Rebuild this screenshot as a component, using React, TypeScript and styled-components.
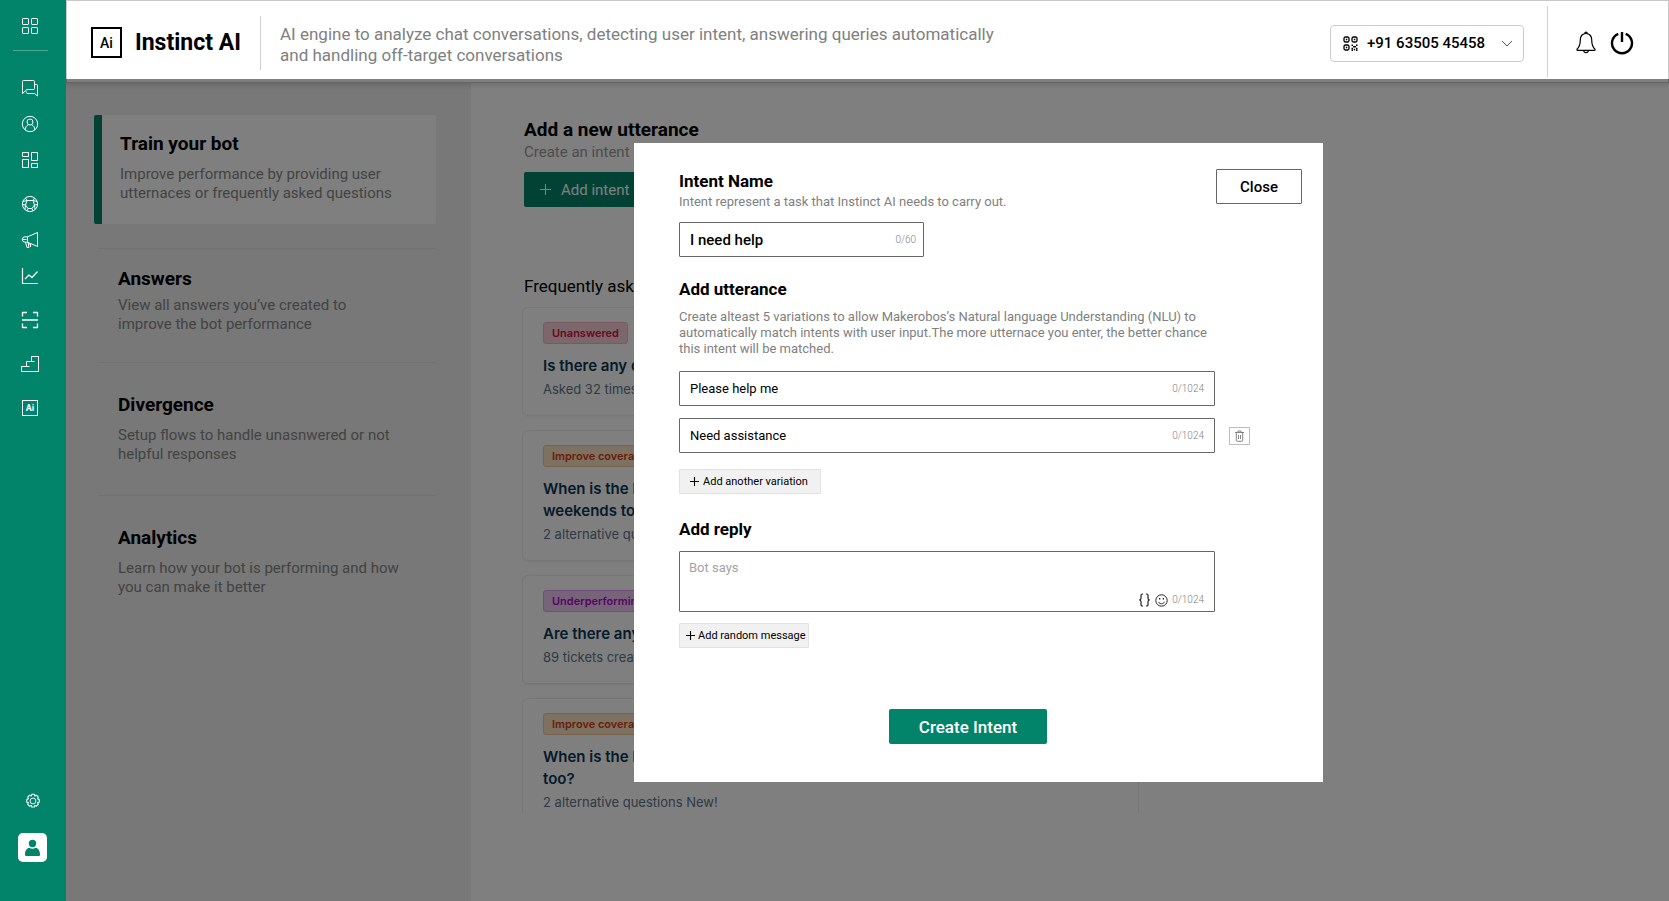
import React from "react";
import styled, { createGlobalStyle } from "styled-components";

const GREEN = "#02846b";

const GlobalStyle = createGlobalStyle`
  *, *::before, *::after { box-sizing: border-box; }
  body { margin: 0; background: #fff; font-family: Roboto, "Liberation Sans", sans-serif; color: #000; }
  h1, h2, h3, p { margin: 0; }
  button, input, select, textarea { font-family: inherit; color: inherit; margin: 0; }
  button { cursor: pointer; }
  a { color: inherit; text-decoration: none; }
  svg { display: block; flex: none; }
`;

/* ---------- shell ---------- */

const Shell = styled.div`
  position: relative;
  display: flex;
  min-height: 100vh;
`;

const Rail = styled.nav`
  position: relative;
  z-index: 3;
  flex: none;
  width: 66px;
  padding: 14px 0 39px;
  display: flex;
  flex-direction: column;
  align-items: center;
  background: ${GREEN};
  color: #fff;
`;

const RailMain = styled.div`
  display: flex;
  flex-direction: column;
  align-items: center;
  padding-right: 6px;
`;

const RailDivider = styled.hr`
  width: 35px;
  height: 1px;
  margin: 12px 0 25px;
  border: 0;
  background: #4fa897;
`;

const RailGroups = styled.div`
  display: flex;
  flex-direction: column;
  gap: 20px;
`;

const RailGroup = styled.div`
  display: flex;
  flex-direction: column;
  gap: 12px;
`;

const RailButton = styled.button`
  width: 32px;
  height: 24px;
  padding: 0;
  border: 0;
  background: none;
  display: flex;
  align-items: center;
  justify-content: center;
`;

const RailFooter = styled.div`
  margin-top: auto;
  padding-right: 1px;
  display: flex;
  flex-direction: column;
  align-items: center;
  gap: 20px;
`;

const Avatar = styled.button`
  width: 29px;
  height: 29px;
  padding: 0;
  border: 0;
  border-radius: 5px;
  background: #fff;
  color: ${GREEN};
  display: flex;
  align-items: center;
  justify-content: center;
`;

const Workspace = styled.div`
  flex: 1;
  min-width: 0;
  display: flex;
  flex-direction: column;
`;

/* ---------- header ---------- */

const Header = styled.header`
  position: relative;
  display: flex;
  align-items: center;
  height: 83px;
  padding: 0 34px 0 24px;
  border: 1px solid #c8c8c8;
  box-shadow: 0 2px 5px rgba(0, 0, 0, 0.14);
`;

const LogoBox = styled.span`
  width: 31px;
  height: 31px;
  border: 2px solid #000;
  display: flex;
  align-items: center;
  justify-content: center;
  font-size: 14px;
  line-height: 18px;
  font-weight: 500;
`;

const Brand = styled.h1`
  margin-left: 13px;
  font-size: 23px;
  line-height: 28px;
  font-weight: 700;
  white-space: nowrap;
`;

const Separator = styled.span<{ $height: number }>`
  flex: none;
  width: 1px;
  height: ${(p) => p.$height}px;
  background: #d0d0d0;
`;

const BrandSide = styled.div`
  display: flex;
  align-items: center;
  flex: none;
  width: 170px;
  justify-content: space-between;
  margin-right: 19px;
  padding-top: 2px;
  & > div { display: flex; align-items: center; }
`;

const Tagline = styled.p`
  flex: 0 1 750px;
  font-size: 17px;
  line-height: 21px;
  color: #808080;
  padding-top: 7px;
`;

const HeaderTools = styled.div`
  margin-left: auto;
  display: flex;
  align-items: center;
`;

const PhonePicker = styled.label`
  display: flex;
  align-items: center;
  width: 194px;
  height: 37px;
  margin: 3px 23px 0 0;
  padding: 0 10px 0 12px;
  border: 1px solid #ccc;
  border-radius: 4px;
`;

const PhoneSelect = styled.select`
  flex: 1;
  min-width: 0;
  margin-left: 9px;
  padding: 0;
  border: 0;
  background: none;
  appearance: none;
  font-size: 15px;
  line-height: 20px;
  font-weight: 500;
`;

const IconButton = styled.button`
  padding: 0;
  border: 0;
  background: none;
`;

const HeaderActions = styled.div`
  display: flex;
  align-items: center;
  gap: 14px;
  margin-left: 28px;
  padding-top: 2px;
`;

/* ---------- section menu ---------- */

const Body = styled.div`
  flex: 1;
  display: flex;
`;

const SectionMenu = styled.aside`
  flex: none;
  width: 405px;
  padding: 32px 35px 0 28px;
  background: #f0f0f0;
`;

const ActiveSection = styled.a`
  display: block;
  height: 109px;
  margin-bottom: 24px;
  padding: 17px 10px 22px 18px;
  border-left: 8px solid ${GREEN};
  border-radius: 2px;
  background: #fff;
`;

const SectionLink = styled.a<{ $top: number; $bottom: number }>`
  display: block;
  margin-left: 4px;
  padding: ${(p) => p.$top}px 8px ${(p) => p.$bottom}px 20px;
  border-top: 1px solid #e4e4e4;
`;

const SectionTitle = styled.h2`
  font-size: 19px;
  line-height: 24px;
  font-weight: 700;
`;

const SectionText = styled.p<{ $gap: number }>`
  margin-top: ${(p) => p.$gap}px;
  font-size: 15px;
  line-height: 19px;
  color: #868686;
`;

/* ---------- page content ---------- */

const Content = styled.main`
  flex: 1;
  min-width: 0;
  padding: 35px 0 0 51px;
`;

const Intro = styled.div`
  padding-left: 2px;
`;

const IntroText = styled.p`
  font-size: 15px;
  line-height: 20px;
  color: #999;
`;

const AddIntentButton = styled.button`
  display: flex;
  align-items: center;
  gap: 10px;
  height: 35px;
  margin-top: 10px;
  padding: 0 16px;
  border: 0;
  border-radius: 2px;
  background: ${GREEN};
  color: #fff;
  font-size: 15px;
  line-height: 20px;
`;

const ListHeading = styled.h2`
  margin-top: 67px;
  padding-left: 2px;
  font-size: 17px;
  line-height: 24px;
  font-weight: 400;
`;

const QuestionList = styled.ul`
  width: 617px;
  height: 506px;
  margin: 9px 0 0;
  padding: 0;
  overflow: hidden;
  list-style: none;
  display: flex;
  flex-direction: column;
  gap: 14px;
  font-family: Inter, "Liberation Sans", sans-serif;
`;

const QuestionCard = styled.li`
  flex: none;
  padding: 14px 20px 16px;
  border: 1px solid #ececec;
  border-radius: 6px;
  box-shadow: 0 1px 3px rgba(0, 0, 0, 0.06);
`;

type Tone = "red" | "orange" | "purple";
const tones: Record<Tone, { bg: string; line: string; ink: string }> = {
  red: { bg: "#f8d0d8", line: "#f4b4c0", ink: "#d80c34" },
  orange: { bg: "#fbe2c4", line: "#f2c595", ink: "#d63a12" },
  purple: { bg: "#eec8f6", line: "#dc9cea", ink: "#a60cc0" },
};

const Tag = styled.span<{ $tone: Tone }>`
  display: inline-block;
  height: 22px;
  padding: 0 8px;
  border: 1px solid ${(p) => tones[p.$tone].line};
  border-radius: 3px;
  background: ${(p) => tones[p.$tone].bg};
  color: ${(p) => tones[p.$tone].ink};
  font-size: 11px;
  line-height: 20px;
  font-weight: 600;
  vertical-align: top;
`;

const Question = styled.h3`
  margin-top: 11px;
  font-size: 15px;
  line-height: 22px;
  font-weight: 600;
  color: #0a3652;
`;

const QuestionMeta = styled.p`
  margin-top: 2px;
  font-size: 13px;
  line-height: 20px;
  color: #5e7488;
`;

/* ---------- dialog ---------- */

const Overlay = styled.div`
  position: absolute;
  z-index: 2;
  inset: 79px 0 0 66px;
  display: flex;
  align-items: flex-start;
  padding-top: 64px;
  background: rgba(0, 0, 0, 0.5);
  &::before { content: ""; flex: 568 0 0; }
  &::after { content: ""; flex: 346 0 0; }
`;

const Dialog = styled.form`
  flex: none;
  width: 689px;
  padding: 26px 21px 38px 45px;
  background: #fff;
`;

const DialogTop = styled.div`
  display: flex;
  justify-content: space-between;
  align-items: flex-start;
`;

const FieldHeading = styled.label`
  display: block;
  font-size: 17px;
  line-height: 24px;
  font-weight: 700;
`;

const FieldNote = styled.p<{ $gap: number }>`
  margin-top: ${(p) => p.$gap}px;
  font-size: 13px;
  line-height: 16px;
  color: #808080;
`;

const CloseButton = styled.button`
  width: 86px;
  height: 35px;
  padding: 0;
  border: 1px solid #666;
  border-radius: 1px;
  background: #fff;
  font-size: 15px;
  line-height: 20px;
  font-weight: 500;
`;

const Group = styled.section<{ $top: number }>`
  width: 536px;
  margin-top: ${(p) => p.$top}px;
  display: flex;
  flex-direction: column;
`;

const FieldBox = styled.div<{ $width?: number }>`
  display: flex;
  align-items: center;
  width: ${(p) => (p.$width ? `${p.$width}px` : "100%")};
  height: 35px;
  padding: 0 ${(p) => (p.$width ? 7 : 10)}px 0 10px;
  border: 1px solid #666;
  border-radius: 1px;
`;

const TextInput = styled.input<{ $strong?: boolean }>`
  flex: 1;
  min-width: 0;
  padding: 0;
  border: 0;
  outline: 0;
  background: none;
  font-size: ${(p) => (p.$strong ? 15 : 13)}px;
  line-height: 20px;
  font-weight: ${(p) => (p.$strong ? 500 : 400)};
`;

const Counter = styled.span`
  font-size: 10px;
  line-height: 14px;
  font-weight: 300;
  color: #808080;
`;

const VariationRow = styled.div`
  display: flex;
  align-items: center;
  margin-right: -35px;
`;

const DeleteButton = styled.button`
  flex: none;
  width: 21px;
  height: 18px;
  margin-left: 14px;
  padding: 0;
  border: 1px solid #bdbdbd;
  background: #fff;
  display: flex;
  align-items: center;
  justify-content: center;
`;

const Variations = styled.div`
  display: flex;
  flex-direction: column;
  gap: 12px;
  margin: 14px 0 16px;
`;

const SmallButton = styled.button<{ $pad: number; $gap: number; $width: number }>`
  display: flex;
  align-items: center;
  gap: ${(p) => p.$gap}px;
  width: ${(p) => p.$width}px;
  height: 25px;
  padding: 0 0 0 ${(p) => p.$pad}px;
  border: 1px solid #e2e2e2;
  border-radius: 1px;
  background: #f1f1f1;
  font-size: 11px;
  line-height: 14px;
  font-weight: 400;
  color: #000;
  white-space: nowrap;
`;

const ReplyBox = styled.div`
  display: flex;
  flex-direction: column;
  height: 61px;
  margin: 10px 0 11px;
  padding: 8px 10px 4px 9px;
  border: 1px solid #666;
  border-radius: 1px;
`;

const ReplyInput = styled.textarea`
  flex: 1;
  min-height: 0;
  padding: 0;
  border: 0;
  outline: 0;
  resize: none;
  overflow: hidden;
  background: none;
  font-size: 13px;
  line-height: 16px;
  &::placeholder { color: #a3a3a3; opacity: 1; }
`;

const ReplyTools = styled.div`
  display: flex;
  align-items: center;
  justify-content: flex-end;
  gap: 4px;
`;

const DialogActions = styled.div`
  display: flex;
  justify-content: center;
  margin-top: 61px;
  padding-right: 45px;
`;

const CreateButton = styled.button`
  width: 158px;
  height: 35px;
  padding: 0;
  border: 0;
  border-radius: 2px;
  background: ${GREEN};
  color: #fff;
  font-size: 17px;
  line-height: 20px;
  font-weight: 500;
`;

/* ---------- icons ---------- */

const Line = ({ size = 18, w = 1, children }: { size?: number; w?: number; children: React.ReactNode }) => (
  <svg width={size} height={size} viewBox="0 0 18 18" fill="none" stroke="currentColor" strokeWidth={w} strokeLinejoin="round" aria-hidden="true">
    {children}
  </svg>
);

const GridIcon = () => (
  <Line>
    <rect x="1.5" y="1.5" width="6" height="6" rx=".6" />
    <rect x="10.5" y="1.5" width="6" height="6" rx=".6" />
    <rect x="1.5" y="10.5" width="6" height="6" rx=".6" />
    <rect x="10.5" y="10.5" width="6" height="6" rx=".6" />
  </Line>
);
const ChatIcon = () => (
  <Line>
    <path d="M1.500 14.500V2.500q0-1 1-1h10q1 0 1 1v7q0 1-1 1H6z" />
    <path d="M5.500 12.500v1q0 1 1 1h7l3 2.500V6.500q0-1-1-1h-2" />
  </Line>
);
const UserCircleIcon = () => (
  <Line>
    <circle cx="9" cy="9" r="7.700" />
    <circle cx="9" cy="7" r="3" />
    <path d="M4.200 15c0-3 1.600-4.400 3-5M13.800 15c0-3-1.600-4.400-3-5" />
  </Line>
);
const BoardIcon = () => (
  <Line>
    <rect x="1.500" y="1.500" width="6" height="4" />
    <rect x="1.500" y="8.500" width="6" height="8" />
    <rect x="10.500" y="1.500" width="6" height="8" />
    <rect x="10.500" y="12.500" width="6" height="4" />
  </Line>
);
const BallIcon = () => (
  <Line>
    <circle cx="9" cy="9" r="7.600" />
    <path d="M6 5.500h6l1.500 4.500L11 13.500H7L4.500 10z" />
    <path d="M6 5.500 4.500 3M6 5.500 2 6.500M12 5.500l1.500-2.500M12 5.500l4 1M13.500 10l3-.5M13.500 10l.5 4.500M11 13.500l1 2.500M7 13.500 6 16M4.500 10 4 14.500M4.500 10l-3-.5" />
  </Line>
);
const MegaphoneIcon = () => (
  <Line>
    <path d="M6.500 5.800 16.500 1.500v14L6.500 11.200H4a2.700 2.700 0 0 1 0-5.400z" />
    <path d="M6.500 5.800v5.400M1.500 8.500h4M4.500 11.200 6 16.500h2l-1-5M7 13h2.500v3" />
  </Line>
);
const ChartIcon = () => (
  <Line w={1.2}>
    <path d="M1.500 1v15.500H17" />
    <path d="M4 12l4-4 3 2.500 5.500-6" />
  </Line>
);
const ScanIcon = () => (
  <Line w={1.3}>
    <path d="M1.500 5.500v-4H6M12 1.500h4.500v4M16.500 12.500v4H12M6 16.500H1.500v-4M1 9h16" />
  </Line>
);
const StairsIcon = () => (
  <svg width="20" height="18" viewBox="0 0 20 18" fill="none" stroke="currentColor" aria-hidden="true">
    <path d="M1.500 16.500v-5h5v-5h5v-5h7v15zM6.500 11.500h3M11.500 6.500h3" />
  </svg>
);
const AiBadge = styled.span`
  width: 16px;
  height: 16px;
  border: 1px solid #fff;
  font-size: 9px;
  line-height: 14px;
  font-weight: 700;
  text-align: center;
`;
const GearIcon = () => (
  <Line size={16}>
    <circle cx="9" cy="9" r="3.300" />
    <path
      strokeWidth="1.2"
      d="M7.500 1.500h3l.6 1.900 1.800-.9 2.100 2.100-.9 1.800 1.900.9v3l-1.900.6.9 1.800-2.100 2.100-1.800-.9-.6 1.900h-3l-.6-1.900-1.800.9L3 12.700l.9-1.800-1.900-.6v-3l1.900-.9L3 4.600l2.100-2.100 1.800.9z"
    />
  </Line>
);
const PersonIcon = () => (
  <svg width="17" height="18" viewBox="0 0 17 18" fill="currentColor" aria-hidden="true">
    <circle cx="8.500" cy="4.500" r="3.700" />
    <path d="M1 15.500C1 11.500 3 9 5.500 8.800c1.800 1.200 4.200 1.200 6 0C14 9 16 11.500 16 15.500c0 1-.6 1.500-1.500 1.500h-12C1.600 17 1 16.500 1 15.500z" />
  </svg>
);
const QrIcon = () => (
  <svg width="15" height="15" viewBox="0 0 15 15" fill="none" stroke="#000" strokeWidth="1.3" aria-hidden="true">
    <rect x="1" y="1" width="5" height="5" rx="1.500" />
    <rect x="9" y="1" width="5" height="5" rx="1.500" />
    <rect x="1" y="9" width="5" height="5" rx="1.500" />
    <path strokeWidth="1.5" d="M2.800 3.500h1.500M10.800 3.500h1.500M2.800 11.500h1.500M8.500 9.200H10M13 9.200h1.500M10 10.800h3M8.500 12.400H10M13 12.400h1.500M8.500 14.200H10M11.500 12.800v1.500M13 14.200h1.500" />
  </svg>
);
const ChevronIcon = () => (
  <svg width="12" height="7" viewBox="0 0 12 7" fill="none" stroke="#555" aria-hidden="true">
    <path d="M1 1l5 5 5-5" />
  </svg>
);
const BellIcon = () => (
  <svg width="20" height="23" viewBox="0 0 20 23" fill="none" stroke="#000" strokeWidth="1.2" strokeLinejoin="round" aria-hidden="true">
    <path d="M10 2.500c-3.600 0-5.700 2.600-5.700 6.200 0 5-1 7.300-3.200 9.400q-.6 1.200.6 1.200h16.600q1.200 0 .6-1.200c-2.200-2.100-3.200-4.400-3.200-9.400 0-3.600-2.100-6.200-5.700-6.200z" />
    <path d="M8.600 2.600a1.400 1.400 0 1 1 2.800 0M7.600 19.500c.2 1.500 1.200 2.200 2.400 2.200s2.200-.7 2.400-2.200" />
  </svg>
);
const PowerIcon = () => (
  <svg width="24" height="24" viewBox="0 0 24 24" fill="none" stroke="#000" strokeWidth="2.4" aria-hidden="true">
    <path d="M8.300 2.900a10 10 0 1 0 7.400 0M12 1v10" />
  </svg>
);
const PlusIcon = ({ size, w = 1 }: { size: number; w?: number }) => (
  <svg width={size} height={size} viewBox="0 0 10 10" stroke="currentColor" strokeWidth={w} aria-hidden="true">
    <path d="M5 0v10M0 5h10" />
  </svg>
);
const TrashIcon = () => (
  <svg width="9" height="12" viewBox="0 0 9 12" fill="none" stroke="#777" strokeWidth=".9" aria-hidden="true">
    <path d="M0 2.500h9M3 2.500V1h3v1.500M1.300 2.500v8q0 .8.8.8h4.800q.8 0 .8-.8v-8M3.500 5v4M5.500 5v4" />
  </svg>
);
const BracesIcon = () => (
  <svg width="13" height="14" viewBox="0 0 13 14" fill="none" stroke="#222" strokeWidth="1.2" aria-hidden="true">
    <path d="M5 1h-.5Q3 1 3 2.300v3Q3 7 1.200 7 3 7 3 8.700v3Q3 13 4.500 13H5M8 1h.5Q10 1 10 2.300v3Q10 7 11.800 7 10 7 10 8.700v3Q10 13 8.500 13H8" />
  </svg>
);
const SmileIcon = () => (
  <svg width="13" height="13" viewBox="0 0 13 13" fill="none" stroke="#222" aria-hidden="true">
    <circle cx="6.500" cy="6.500" r="5.700" />
    <path d="M3.500 7.800c1 2.600 5 2.600 6 0" />
    <path strokeWidth="1.4" d="M4 4.800h1.300M7.700 4.800H9" />
  </svg>
);

/* ---------- data ---------- */

const railGroups = [
  [
    { label: "Chats", icon: <ChatIcon /> },
    { label: "Contacts", icon: <UserCircleIcon /> },
    { label: "Boards", icon: <BoardIcon /> },
  ],
  [
    { label: "Network", icon: <BallIcon /> },
    { label: "Campaigns", icon: <MegaphoneIcon /> },
    { label: "Reports", icon: <ChartIcon /> },
  ],
  [{ label: "Scan", icon: <ScanIcon /> }],
  [{ label: "Flows", icon: <StairsIcon /> }],
  [{ label: "Instinct AI", icon: <AiBadge aria-hidden="true">Ai</AiBadge> }],
];

const sections = [
  { title: "Answers", lines: ["View all answers you’ve created to", "improve the bot performance"], top: 18, gap: 5, bottom: 28 },
  { title: "Divergence", lines: ["Setup flows to handle unasnwered or not", "helpful responses"], top: 30, gap: 9, bottom: 31 },
  { title: "Analytics", lines: ["Learn how your bot is performing and how", "you can make it better"], top: 30, gap: 9, bottom: 31 },
];

const questions: { tone: Tone; tag: string; lines: string[]; meta: string }[] = [
  { tone: "red", tag: "Unanswered", lines: ["Is there any charge?"], meta: "Asked 32 times" },
  { tone: "orange", tag: "Improve coverage", lines: ["When is the bot available, and on", "weekends too?"], meta: "2 alternative questions" },
  { tone: "purple", tag: "Underperforming", lines: ["Are there any discounts?"], meta: "89 tickets created" },
  { tone: "orange", tag: "Improve coverage", lines: ["When is the bot available on weekends", "too?"], meta: "2 alternative questions New!" },
];

const Lines = ({ lines }: { lines: string[] }) => (
  <>
    {lines.map((line, i) => (
      <React.Fragment key={line}>
        {i > 0 && <br />}
        {line}
      </React.Fragment>
    ))}
  </>
);

export default function App() {
  return (
    <Shell>
      <GlobalStyle />
      <Rail aria-label="Main">
        <RailMain>
          <RailButton aria-label="Dashboard"><GridIcon /></RailButton>
          <RailDivider />
          <RailGroups>
            {railGroups.map((group, i) => (
              <RailGroup key={i}>
                {group.map((item) => (
                  <RailButton key={item.label} aria-label={item.label}>{item.icon}</RailButton>
                ))}
              </RailGroup>
            ))}
          </RailGroups>
        </RailMain>
        <RailFooter>
          <RailButton aria-label="Settings"><GearIcon /></RailButton>
          <Avatar aria-label="Account"><PersonIcon /></Avatar>
        </RailFooter>
      </Rail>

      <Workspace>
        <Header>
          <BrandSide>
            <div>
              <LogoBox>Ai</LogoBox>
              <Brand>Instinct AI</Brand>
            </div>
            <Separator $height={54} />
          </BrandSide>
          <Tagline>
            AI engine to analyze chat conversations, detecting user intent, answering queries automatically
            <br />
            and handling off-target conversations
          </Tagline>
          <HeaderTools>
            <PhonePicker>
              <QrIcon />
              <PhoneSelect aria-label="Phone number" defaultValue="a">
                <option value="a">+91 63505 45458</option>
              </PhoneSelect>
              <ChevronIcon />
            </PhonePicker>
            <Separator $height={71} />
            <HeaderActions>
              <IconButton aria-label="Notifications"><BellIcon /></IconButton>
              <IconButton aria-label="Log out"><PowerIcon /></IconButton>
            </HeaderActions>
          </HeaderTools>
        </Header>

        <Body>
          <SectionMenu>
            <ActiveSection href="#train">
              <SectionTitle>Train your bot</SectionTitle>
              <SectionText $gap={9}>
                <Lines lines={["Improve performance by providing user", "utternaces or frequently asked questions"]} />
              </SectionText>
            </ActiveSection>
            {sections.map((s) => (
              <SectionLink key={s.title} href={`#${s.title.toLowerCase()}`} $top={s.top} $bottom={s.bottom}>
                <SectionTitle>{s.title}</SectionTitle>
                <SectionText $gap={s.gap}><Lines lines={s.lines} /></SectionText>
              </SectionLink>
            ))}
          </SectionMenu>

          <Content>
            <Intro>
              <SectionTitle>Add a new utterance</SectionTitle>
              <IntroText>Create an intent</IntroText>
              <AddIntentButton><PlusIcon size={11} />Add intent</AddIntentButton>
            </Intro>
            <ListHeading>Frequently asked</ListHeading>
            <QuestionList>
              {questions.map((q, i) => (
                <QuestionCard key={i}>
                  <Tag $tone={q.tone}>{q.tag}</Tag>
                  <Question><Lines lines={q.lines} /></Question>
                  <QuestionMeta>{q.meta}</QuestionMeta>
                </QuestionCard>
              ))}
            </QuestionList>
          </Content>
        </Body>
      </Workspace>

      <Overlay>
        <Dialog role="dialog" aria-label="Create intent" onSubmit={(e) => e.preventDefault()}>
          <DialogTop>
            <div>
              <FieldHeading htmlFor="intent-name">Intent Name</FieldHeading>
              <FieldNote $gap={1}>Intent represent a task that Instinct AI needs to carry out.</FieldNote>
            </div>
            <CloseButton type="button">Close</CloseButton>
          </DialogTop>
          <Group $top={12}>
            <FieldBox $width={245}>
              <TextInput id="intent-name" $strong defaultValue="I need help" />
              <Counter>0/60</Counter>
            </FieldBox>
          </Group>

          <Group $top={20}>
            <FieldHeading htmlFor="variation-1">Add utterance</FieldHeading>
            <FieldNote $gap={8}>
              Create alteast 5 variations to allow Makerobos’s Natural language Understanding (NLU) to
              <br />
              automatically match intents with user input.The more utternace you enter, the better chance
              <br />
              this intent will be matched.
            </FieldNote>
            <Variations>
              <FieldBox>
                <TextInput id="variation-1" defaultValue="Please help me" />
                <Counter>0/1024</Counter>
              </FieldBox>
              <VariationRow>
                <FieldBox>
                  <TextInput aria-label="Variation 2" defaultValue="Need assistance" />
                  <Counter>0/1024</Counter>
                </FieldBox>
                <DeleteButton type="button" aria-label="Delete variation"><TrashIcon /></DeleteButton>
              </VariationRow>
            </Variations>
            <SmallButton type="button" $width={142} $pad={10} $gap={4}>
              <PlusIcon size={9} w={1.2} />Add another variation
            </SmallButton>
          </Group>

          <Group $top={23}>
            <FieldHeading htmlFor="reply">Add reply</FieldHeading>
            <ReplyBox>
              <ReplyInput id="reply" placeholder="Bot says" />
              <ReplyTools>
                <IconButton type="button" aria-label="Insert variable"><BracesIcon /></IconButton>
                <IconButton type="button" aria-label="Insert emoji"><SmileIcon /></IconButton>
                <Counter>0/1024</Counter>
              </ReplyTools>
            </ReplyBox>
            <SmallButton type="button" $width={130} $pad={6} $gap={3}>
              <PlusIcon size={9} w={1.2} />Add random message
            </SmallButton>
          </Group>

          <DialogActions>
            <CreateButton type="submit">Create Intent</CreateButton>
          </DialogActions>
        </Dialog>
      </Overlay>
    </Shell>
  );
}
